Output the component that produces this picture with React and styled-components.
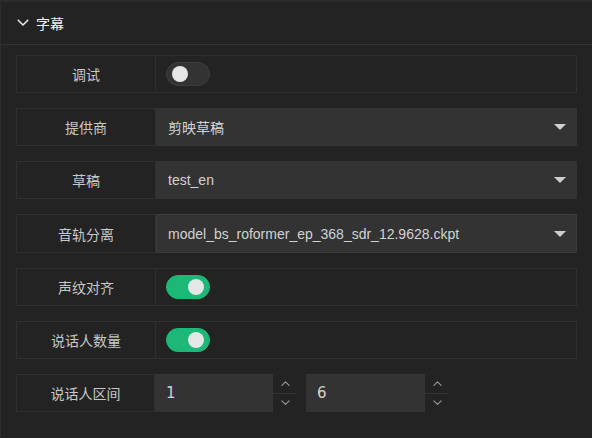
import styled, { createGlobalStyle } from 'styled-components';

const GlobalStyle = createGlobalStyle`
  html, body {
    margin: 0;
    padding: 0;
    background: #232323;
  }
  body {
    font-family: "Liberation Sans", "Noto Sans CJK SC", sans-serif;
  }
`;

const Panel = styled.div`
  width: 592px;
  height: 438px;
  box-sizing: border-box;
  background: #232323;
  border-top: 2px solid #2c2c2c;
  border-left: 1px solid #2c2c2c;
  overflow: hidden;
`;

const Header = styled.div`
  height: 42px;
  display: flex;
  align-items: center;
  gap: 7px;
  padding-left: 16px;
  border-bottom: 1px solid #333;
  color: #f2f2f2;
  font-size: 14px;
  font-family: "Noto Sans CJK SC", sans-serif;
`;

const Body = styled.div`
  padding: 10px 15px 0 15px;
  display: flex;
  flex-direction: column;
  gap: 15px;
`;

const Row = styled.div`
  display: flex;
  height: ${p => (p.$tall ? 39 : 38)}px;
  box-sizing: border-box;
  border: 1px solid ${p => (p.$plain ? 'transparent' : '#2f2f2f')};
`;

const Label = styled.div`
  width: 139px;
  flex: none;
  display: flex;
  align-items: center;
  justify-content: center;
  color: #c8c8c8;
  font-size: 14px;
  font-family: "Noto Sans CJK SC", sans-serif;
  border-right: 1px solid #2f2f2f;
  box-sizing: border-box;
  ${p => p.$boxed && 'border: 1px solid #2f2f2f; height: 38px; margin: -1px 0 0 -1px;'}
`;

const Cell = styled.div`
  flex: 1;
  display: flex;
  align-items: center;
  padding-left: 10px;
`;

const Select = styled.div`
  flex: 1;
  margin: -1px -1px -1px 0;
  display: flex;
  align-items: center;
  justify-content: space-between;
  padding: 0 10px 0 11px;
  background: #333;
  border-radius: 2px;
  color: #d2d2d2;
  font-size: 14px;
  border: 1px solid ${p => (p.$active ? '#3c3c3c' : 'transparent')};
  font-family: "Liberation Sans", "Noto Sans CJK SC", sans-serif;
`;

const Caret = styled.span`
  width: 0;
  height: 0;
  border-left: 6px solid transparent;
  border-right: 6px solid transparent;
  border-top: 6px solid #cfcfcf;
`;

const Switch = styled.div`
  width: 44px;
  height: 24px;
  box-sizing: border-box;
  border-radius: 12px;
  background: ${p => (p.$on ? '#1bb877' : '#333')};
  border: 1px solid ${p => (p.$on ? '#1bb877' : '#3d3d3d')};
  display: flex;
  align-items: center;
  justify-content: ${p => (p.$on ? 'flex-end' : 'flex-start')};
  padding: 0 5px;
`;

const Knob = styled.span`
  width: 16px;
  height: 16px;
  border-radius: 50%;
  background: #e6e6e6;
`;

const Numbers = styled.div`
  display: flex;
  gap: 9px;
  margin: -1px 0;
`;

const NumberBox = styled.div`
  display: flex;
`;

const NumberInput = styled.div`
  width: ${p => p.$w}px;
  height: 38px;
  box-sizing: border-box;
  background: #333;
  display: flex;
  align-items: center;
  padding-left: 11px;
  color: #d2d2d2;
  font-size: 15px;
  font-family: "DejaVu Sans", sans-serif;
`;

const Spinner = styled.div`
  width: 24px;
  display: flex;
  flex-direction: column;
`;

const SpinBtn = styled.div`
  flex: 1;
  display: flex;
  align-items: center;
  justify-content: center;
  color: #9a9a9a;
  & + & {
    border-top: 1px solid #333;
  }
`;

const Chevron = ({ dir = 'down', size = 10, color = 'currentColor', width = 1.5 }) => (
  <svg width={size} height={size * 0.6} viewBox="0 0 10 6" fill="none">
    <path
      d={dir === 'down' ? 'M1 1L5 5L9 1' : 'M1 5L5 1L9 5'}
      stroke={color}
      strokeWidth={width}
      strokeLinecap="round"
      strokeLinejoin="round"
    />
  </svg>
);

const NumberField = ({ value, w }) => (
  <NumberBox>
    <NumberInput $w={w}>{value}</NumberInput>
    <Spinner>
      <SpinBtn><Chevron dir="up" size={9} width={1.2} /></SpinBtn>
      <SpinBtn><Chevron dir="down" size={9} width={1.2} /></SpinBtn>
    </Spinner>
  </NumberBox>
);

const App = () => (
  <Panel>
    <GlobalStyle />
    <Header>
      <Chevron dir="down" size={12} color="#e8e8e8" width={1.3} />
      <span>字幕</span>
    </Header>
    <Body>
      <Row>
        <Label>调试</Label>
        <Cell><Switch><Knob /></Switch></Cell>
      </Row>
      <Row>
        <Label>提供商</Label>
        <Select>剪映草稿<Caret /></Select>
      </Row>
      <Row>
        <Label>草稿</Label>
        <Select>test_en<Caret /></Select>
      </Row>
      <Row $tall>
        <Label>音轨分离</Label>
        <Select $active>model_bs_roformer_ep_368_sdr_12.9628.ckpt<Caret /></Select>
      </Row>
      <Row>
        <Label>声纹对齐</Label>
        <Cell><Switch $on><Knob /></Switch></Cell>
      </Row>
      <Row>
        <Label>说话人数量</Label>
        <Cell><Switch $on><Knob /></Switch></Cell>
      </Row>
      <Row $plain>
        <Label $boxed>说话人区间</Label>
        <Numbers>
          <NumberField value="1" w={118} />
          <NumberField value="6" w={119} />
        </Numbers>
      </Row>
    </Body>
  </Panel>
);

export default App;
